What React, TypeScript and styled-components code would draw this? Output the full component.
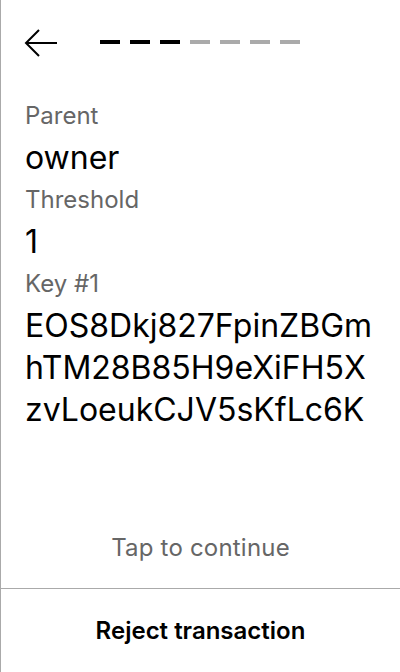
import React from "react";
import styled, { createGlobalStyle } from "styled-components";

const Global = createGlobalStyle`
  html, body { margin: 0; padding: 0; background: #fff; }
  body { font-family: Inter, "Noto Sans", sans-serif; color: #000; }
  * { box-sizing: border-box; }
`;

const Screen = styled.div`
  width: 400px;
  height: 672px;
  border-left: 1px solid #aaa;
  display: flex;
  flex-direction: column;
  background: #fff;
`;

const Header = styled.div`
  height: 86px;
  display: flex;
  align-items: flex-start;
  padding: 29px 0 0 23px;
`;

const BackButton = styled.button`
  border: 0;
  background: none;
  padding: 0;
  width: 34px;
  height: 28px;
  display: block;
  cursor: pointer;
`;

const Steps = styled.div`
  display: flex;
  gap: 10px;
  margin: 11px 0 0 42px;
`;

const Step = styled.span<{ $done: boolean }>`
  width: 20px;
  height: 4px;
  background: ${(p) => (p.$done ? "#000" : "#aaa")};
`;

const Content = styled.div`
  flex: 1;
  padding: 9px 24px 0 24px;
  display: flex;
  flex-direction: column;
`;

const Label = styled.div`
  font-size: 24px;
  line-height: 42px;
  color: #666;
`;

const Value = styled.div`
  font-size: 32px;
  line-height: 42px;
  color: #000;
  white-space: nowrap;
`;

const Spacer = styled.div`
  flex: 1;
`;

const Tap = styled.div`
  text-align: center;
  font-size: 24px;
  letter-spacing: 0.2px;
  line-height: 41px;
  color: #666;
  padding-bottom: 20px;
`;

const Footer = styled.button`
  height: 84px;
  border: 0;
  border-top: 1px solid #aaa;
  background: #fff;
  font-family: Inter, "Noto Sans", sans-serif;
  font-size: 24px;
  font-weight: 600;
  color: #000;
  padding: 0;
  cursor: pointer;
`;

const ArrowLeft = () => (
  <svg width="34" height="28" viewBox="0 0 34 28" fill="none">
    <path d="M15 1 L2 14 L15 27 M2 14 H33" stroke="#000" strokeWidth="2" />
  </svg>
);

const keyLines = ["EOS8Dkj827FpinZBGm", "hTM28B85H9eXiFH5X", "zvLoeukCJV5sKfLc6K"];

export default function App() {
  const steps = [true, true, true, false, false, false, false];
  return (
    <>
      <Global />
      <Screen>
        <Header>
          <BackButton aria-label="Back">
            <ArrowLeft />
          </BackButton>
          <Steps>
            {steps.map((d, i) => (
              <Step key={i} $done={d} />
            ))}
          </Steps>
        </Header>
        <Content>
          <Label>Parent</Label>
          <Value>owner</Value>
          <Label>Threshold</Label>
          <Value>1</Value>
          <Label>Key #1</Label>
          {keyLines.map((l) => (
            <Value key={l}>{l}</Value>
          ))}
          <Spacer />
          <Tap>Tap to continue</Tap>
        </Content>
        <Footer>Reject transaction</Footer>
      </Screen>
    </>
  );
}
